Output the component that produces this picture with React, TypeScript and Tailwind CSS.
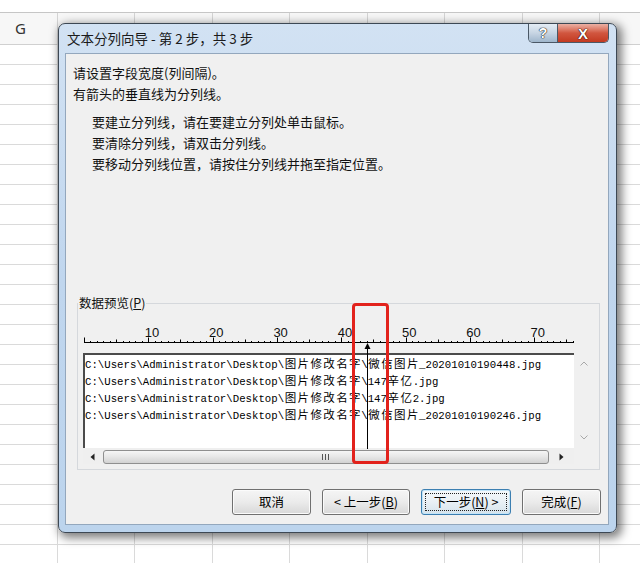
import clsx from 'clsx';

const CW = 6.43;

const previewLines = [
  'C:\\Users\\Administrator\\Desktop\\图片修改名字\\微信图片_20201010190448.jpg',
  'C:\\Users\\Administrator\\Desktop\\图片修改名字\\147辛亿.jpg',
  'C:\\Users\\Administrator\\Desktop\\图片修改名字\\147辛亿2.jpg',
  'C:\\Users\\Administrator\\Desktop\\图片修改名字\\微信图片_20201010190246.jpg',
];

const sheetCols = ['G', '', '', '', '', '', '', 'O'];

function isWide(ch: string) {
  return /[\u3000-\u9fff\uff00-\uffef]/.test(ch);
}

function PreviewLine({ text }: { text: string }) {
  return (
    <div className="h-[17px] whitespace-nowrap leading-[17px]">
      {Array.from(text).map((ch, i) =>
        isWide(ch) ? (
          <span
            key={i}
            className="inline-block w-[12.86px] text-center font-['Noto_Sans_CJK_SC',sans-serif] text-[11.5px]"
          >
            {ch}
          </span>
        ) : (
          <span key={i} className="inline-block w-[6.43px] text-center">
            {ch}
          </span>
        ),
      )}
    </div>
  );
}

function Ruler() {
  const ticks = Array.from({ length: 77 }, (_, i) => i);
  const labels = [10, 20, 30, 40, 50, 60, 70];
  return (
    <svg width={511} height={24} className="block">
      <line x1={1} y1={20.5} x2={491} y2={20.5} stroke="#000" />
      {ticks.map((i) => {
        const x = Math.round(1 + i * CW) + 0.5;
        const h = i % 10 === 0 ? 5 : i % 5 === 0 ? 3 : 1.5;
        return <line key={i} x1={x} x2={x} y1={20.5 - h} y2={20.5} stroke="#000" />;
      })}
      {labels.map((n) => (
        <text
          key={n}
          x={1 + n * CW - 3.5}
          y={14.5}
          fontSize={13}
          fontFamily="'Liberation Sans', sans-serif"
          fill="#111"
        >
          {n}
        </text>
      ))}
    </svg>
  );
}

function DlgButton({
  children,
  width,
  focused,
}: {
  children: React.ReactNode;
  width: string;
  focused?: boolean;
}) {
  return (
    <button
      className={clsx(
        'relative flex h-[26px] items-center justify-center rounded-[3px] border bg-linear-to-b text-[12.5px] text-black',
        focused
          ? 'border-[#3c7fb1] from-[#f4f8fb] via-[#e9f0f5] to-[#d5e3ec] shadow-[inset_0_0_0_1px_#c4e5f8]'
          : 'border-[#707070] from-[#f5f5f5] via-[#ebebeb] to-[#d8d8d8] shadow-[inset_0_0_0_1px_#fbfbfb]',
        width,
      )}
    >
      {children}
      {focused && (
        <span className="absolute inset-[3px] border border-dotted border-[#222]" />
      )}
    </button>
  );
}

function Sheet() {
  return (
    <div className="flex h-full flex-col bg-white font-['Noto_Sans',sans-serif]">
      <div className="h-[13px] shrink-0 border-b border-[#c6c6c6]" />
      <div className="flex h-[32px] shrink-0 border-b border-[#d0d0d0] bg-[#f7f7f7]">
        {sheetCols.map((c, i) => (
          <div
            key={i}
            className={clsx(
              'flex shrink-0 items-center border-r border-[#d4d4d4] text-[15px] text-[#333]',
              i === 0 ? 'w-[58px] pl-[15px]' : 'w-[77.43px] justify-center',
            )}
          >
            {c}
          </div>
        ))}
      </div>
      {Array.from({ length: 26 }, (_, r) => (
        <div key={r} className="flex h-[20px] shrink-0 border-b border-[#dadada]">
          {sheetCols.map((_, i) => (
            <div
              key={i}
              className={clsx(
                'shrink-0 border-r border-[#dadada]',
                i === 0 ? 'w-[58px]' : 'w-[77.43px]',
              )}
            />
          ))}
        </div>
      ))}
    </div>
  );
}

export default function App() {
  return (
    <div className="relative h-[563px] w-[640px] overflow-hidden">
      <Sheet />

      {/* wizard window */}
      <div className="absolute left-[58px] top-[23px] flex h-[510px] w-[559px] flex-col rounded-[7px] border border-[#3d4854] bg-linear-to-b from-[#d2e2f3] via-[#c0d6ee] to-[#bcd4ed] shadow-[3px_3px_10px_2px_rgba(0,0,0,0.5)] font-['Noto_Sans_CJK_SC',sans-serif]">
        <div className="flex h-[29px] shrink-0">
          <div className="flex flex-1 items-center pl-[8px] text-[13.5px] text-[#1b1b1b]">
            文本分列向导 - 第 2 步，共 3 步
          </div>
          <div className="mr-[7px] flex h-[19px] self-start overflow-hidden rounded-b-[5px] border border-t-0 border-[#4a5866]">
            <div className="flex w-[29px] items-center justify-center border-r border-[#4a5866] bg-linear-to-b from-[#e4ecf4] via-[#c7d5e3] to-[#9fb6cc] text-[14px] font-bold leading-none text-white [text-shadow:0_0_1px_#222,0_0_1px_#222,0_0_1px_#222] font-['Liberation_Sans',sans-serif]">
              ?
            </div>
            <div className="flex w-[50px] items-center justify-center bg-linear-to-b from-[#eab0a4] via-[#d1563f] to-[#c2391f] text-[15px] font-bold leading-none text-white [text-shadow:0_0_1px_#3a0d05,0_0_1px_#3a0d05,0_0_1px_#3a0d05] font-['Liberation_Sans',sans-serif]">
              X
            </div>
          </div>
        </div>

        <div className="ml-[6px] mr-[7px] flex h-[472px] flex-col border border-[#93a7bd] bg-[#f0f0f0] text-[13px] text-[#111]">
          <div className="pl-[7px] pt-[7.5px] leading-[21px]">
            <p>请设置字段宽度(列间隔)。</p>
            <p>有箭头的垂直线为分列线。</p>
          </div>
          <div className="mt-[7px] pl-[26px] leading-[21px]">
            <p>要建立分列线，请在要建立分列处单击鼠标。</p>
            <p>要清除分列线，请双击分列线。</p>
            <p>要移动分列线位置，请按住分列线并拖至指定位置。</p>
          </div>

          <fieldset className="ml-[11px] mr-[8px] mt-[119.5px] border border-[#d5d8dc] pb-[5px]">
            <legend className="px-[1px] text-[12.5px] leading-[20px]">
              数据预览(<span className="underline">P</span>)
            </legend>
            <div className="relative ml-[5px] mt-[9px] w-[511px]">
              <Ruler />
              <div className="mt-[7px] flex h-[111px]">
                <div className="flex w-[491px] flex-col">
                  <div className="h-[95px] overflow-hidden border-l-2 border-t-2 border-[#4b4b4b] bg-white font-['Liberation_Mono',monospace] text-[10.7px] text-black">
                    {previewLines.map((l, i) => (
                      <PreviewLine key={i} text={l} />
                    ))}
                  </div>
                  <div className="flex h-[16px] items-center bg-[#efefef] pt-[1px]">
                    <div className="flex w-[19px] justify-center">
                      <svg width={5} height={8}>
                        <polygon points="4.5,0.5 0.5,4 4.5,7.5" fill="#222" />
                      </svg>
                    </div>
                    <div className="relative ml-[1px] flex h-[14px] w-[446px] items-center justify-center rounded-[3px] border border-[#8f8f8f] bg-linear-to-b from-[#f6f6f6] via-[#e6e6e6] to-[#d2d2d2]">
                      <div className="ml-[-2px] flex gap-[2px]">
                        <span className="h-[6px] w-px bg-[#555]" />
                        <span className="h-[6px] w-px bg-[#555]" />
                        <span className="h-[6px] w-px bg-[#555]" />
                      </div>
                    </div>
                    <div className="flex flex-1 justify-center">
                      <svg width={5} height={8}>
                        <polygon points="0.5,0.5 4.5,4 0.5,7.5" fill="#222" />
                      </svg>
                    </div>
                  </div>
                </div>
                <div className="flex w-[20px] flex-col">
                  <div className="flex h-[95px] flex-col items-center justify-between py-[8px]">
                    <svg width={8} height={5}>
                      <polyline points="0.5,4.5 4,1 7.5,4.5" fill="none" stroke="#a8a8a8" />
                    </svg>
                    <svg width={8} height={5}>
                      <polyline points="0.5,0.5 4,4 7.5,0.5" fill="none" stroke="#a8a8a8" />
                    </svg>
                  </div>
                </div>
              </div>

              {/* column break arrow */}
              <svg className="absolute left-[280.5px] top-[21px]" width={7} height={106}>
                <polygon points="3.5,0 0.5,6 6.5,6" fill="#000" />
                <line x1={3.5} y1={5} x2={3.5} y2={106} stroke="#000" />
              </svg>

              {/* red highlight */}
              <div className="absolute left-[269px] top-[-19px] h-[161px] w-[37px] rounded-[4px] border-[3px] border-[#e2221c]" />
            </div>
          </fieldset>

          <div className="mt-[19px] flex justify-end gap-[11px] pr-[7px]">
            <DlgButton width="w-[79px]">取消</DlgButton>
            <DlgButton width="w-[88px]">
              &lt; 上一步(<span className="underline">B</span>)
            </DlgButton>
            <DlgButton width="w-[90px]" focused>
              下一步(<span className="underline">N</span>) &gt;
            </DlgButton>
            <DlgButton width="w-[79px]">
              完成(<span className="underline">F</span>)
            </DlgButton>
          </div>
        </div>
      </div>
    </div>
  );
}
